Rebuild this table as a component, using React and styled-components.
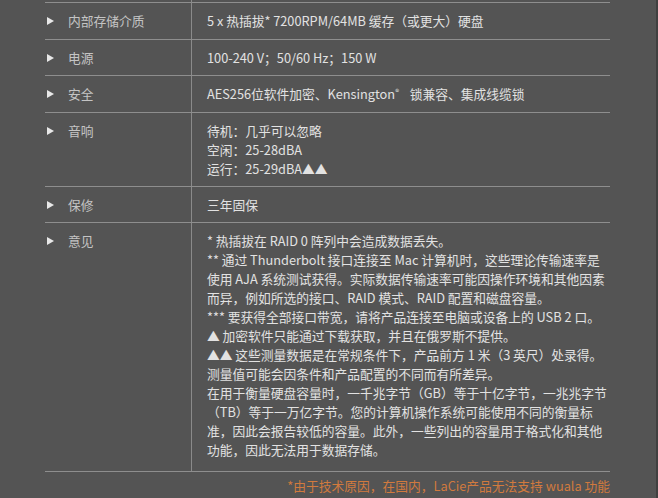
import React from "react";
import styled, { createGlobalStyle } from "styled-components";

const Global = createGlobalStyle`
  html, body {
    margin: 0;
    padding: 0;
    background: #545454;
  }
`;

const Page = styled.div`
  width: 656px;
  height: 498px;
  overflow: hidden;
  background: #545454;
  border-right: 2px solid #404040;
  font-family: "Noto Sans CJK SC", "Noto Sans", sans-serif;
  font-size: 12.75px;
  line-height: 19px;
  color: #dcdcdc;
`;

const Table = styled.div`
  width: 565px;
  margin-left: 45px;
`;

const Row = styled.div`
  display: grid;
  grid-template-columns: 146px 1fr;
  border-bottom: 1px solid #8e8e8e;
`;

const Stub = styled(Row)`
  height: 2px;
`;

const Label = styled.div`
  display: flex;
  align-items: flex-start;
  gap: 14px;
  height: 19px;
  padding: 8px 0 0 2px;
  color: #c4c4c4;
`;

const Arrow = styled.span`
  flex-shrink: 0;
  margin-top: 6px;
  width: 0;
  height: 0;
  border-top: 4px solid transparent;
  border-bottom: 4px solid transparent;
  border-left: 7px solid #e8e8e8;
`;

const Value = styled.div`
  border-left: 1px solid #8a8a8a;
  padding: 8px 0 ${p => p.$pb ?? 8.5}px 15px;
  white-space: nowrap;
  color: #e2e2e2;
`;

const Line = styled.div`
  height: 19px;
`;

const Reg = styled.span`
  position: relative;
  top: -4px;
  font-size: 8px;
  margin-right: 8px;
`;

const Note = styled.div`
  padding-top: 4px;
  text-align: right;
  color: #d17a3e;
`;

const specs = [
  { label: "内部存储介质", lines: ["5 x 热插拔* 7200RPM/64MB 缓存（或更大）硬盘"] },
  { label: "电源", lines: ["100-240 V；50/60 Hz；150 W"] },
  {
    label: "安全",
    lines: [
      <>
        AES256位软件加密、Kensington<Reg>®</Reg> 锁兼容、集成线缆锁
      </>,
    ],
  },
  {
    label: "音响",
    pb: 8,
    lines: ["待机：几乎可以忽略", "空闲：25-28dBA", "运行：25-29dBA▲▲"],
  },
  { label: "保修", lines: ["三年固保"] },
  {
    label: "意见",
    pb: 12,
    lines: [
      "* 热插拔在 RAID 0 阵列中会造成数据丢失。",
      "** 通过 Thunderbolt 接口连接至 Mac 计算机时，这些理论传输速率是",
      "使用 AJA 系统测试获得。实际数据传输速率可能因操作环境和其他因素",
      "而异，例如所选的接口、RAID 模式、RAID 配置和磁盘容量。",
      "*** 要获得全部接口带宽，请将产品连接至电脑或设备上的 USB 2 口。",
      "▲ 加密软件只能通过下载获取，并且在俄罗斯不提供。",
      "▲▲ 这些测量数据是在常规条件下，产品前方 1 米（3 英尺）处录得。",
      "测量值可能会因条件和产品配置的不同而有所差异。",
      "在用于衡量硬盘容量时，一千兆字节（GB）等于十亿字节，一兆兆字节",
      "（TB）等于一万亿字节。您的计算机操作系统可能使用不同的衡量标",
      "准，因此会报告较低的容量。此外，一些列出的容量用于格式化和其他",
      "功能，因此无法用于数据存储。",
    ],
  },
];

export default function App() {
  return (
    <Page>
      <Global />
      <Table>
        <Stub>
          <div />
          <Value $pb={0} />
        </Stub>
        {specs.map(spec => (
          <Row key={spec.label}>
            <Label>
              <Arrow />
              {spec.label}
            </Label>
            <Value $pb={spec.pb}>
              {spec.lines.map((line, i) => (
                <Line key={i}>{line}</Line>
              ))}
            </Value>
          </Row>
        ))}
        <Note>*由于技术原因，在国内，LaCie产品无法支持 wuala 功能</Note>
      </Table>
    </Page>
  );
}
